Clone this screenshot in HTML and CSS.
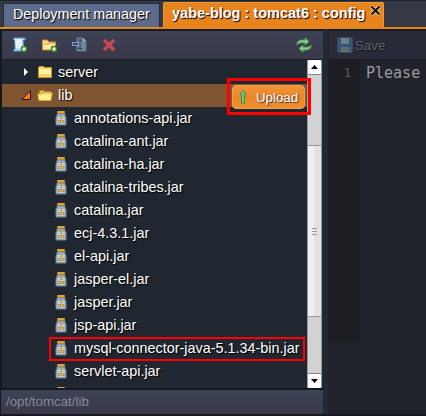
FILE: index.html
```html
<!DOCTYPE html>
<html lang="en">
<head>
<meta charset="utf-8">
<title>Config</title>
<link rel="stylesheet" href="styles.css">
</head>
<body>
<svg width="0" height="0" class="defs">
  <symbol id="jar" viewBox="0 0 16 16">
    <path d="M4 4h8v2l1 1.500v7.500H3V7.500L4 6z" fill="#9fb3c5" stroke="#64839d"/>
    <path d="M4.500 7h7v7h-7z" fill="#c3cbd2"/>
    <path d="M4 1h8v3H4z" fill="#b88425"/><path d="M5 1.500h6v1H5z" fill="#efc768"/>
    <path d="M7 6h2v3H7zM5 10h3v3H5zM8.500 10h3v3h-3z" fill="#b99345"/>
    <path d="M7 7h1v1H7zM6 11h1v1H6zM9 11h1v1H9z" fill="#ffe58e"/>
  </symbol>
  <symbol id="plus" viewBox="0 0 7 7">
    <circle cx="3.500" cy="3.500" r="3.200" fill="#43942b" stroke="#286c1b" stroke-width=".6"/>
    <path d="M3.500 1.500v4M1.500 3.500h4" stroke="#fff" stroke-width="1.200"/>
  </symbol>
</svg>
<div class="app">
  <header class="tabs">
    <div class="tab">Deployment manager</div>
    <div class="tab active">yabe-blog : tomcat6 : config
      <svg class="close" width="11" height="11" viewBox="0 0 11 11"><path d="M1.500 1.500l8 8M9.500 1.500l-8 8" stroke="#fff1d5" stroke-width="3.600"/><path d="M1.500 1.500l8 8M9.500 1.500l-8 8" stroke="#17130d" stroke-width="2.300"/></svg>
    </div>
  </header>
  <main class="panes">
    <section class="files">
      <div class="toolbar">
        <svg width="16" height="16" viewBox="0 0 16 16"><path d="M2 1h10q2 0 1 2h-2l1 11H1l2-2V4Q1 3 2 1z" fill="#b9dcfa" stroke="#5b94cf"/><path d="M3 2h7v9H4z" fill="#e5f3ff"/><use href="#plus" x="8.500" y="8.500" width="7" height="7"/></svg>
        <svg width="16" height="16" viewBox="0 0 16 16"><path d="M.5 3h5l1 2h7v8H.5z" fill="#f8dd8b" stroke="#c59238"/><path d="M2 7h5l1-1h5v6H2z" fill="#ffe8a2"/><path d="M2 7h5l1-1h5" fill="none" stroke="#d29d3d"/><use href="#plus" x="8.500" y="8.500" width="7" height="7"/></svg>
        <svg width="16" height="16" viewBox="0 0 16 16"><path d="M5 1h6l3 3v10H5z" fill="#6f879d" stroke="#60798e"/><path d="M11 1v3h3" fill="#a8bac8"/><path d="M0 5h8v4H0z" fill="#8999b4"/><path d="M1 6h5v2H1z" fill="#25479a"/><path d="M6 3h4M8 3v8M6 11.500h4" fill="none" stroke="#283746"/></svg>
        <svg width="16" height="16" viewBox="0 0 16 16"><path d="M2 3l10 10M12 3L2 13" stroke="#963f4b" stroke-width="4"/><path d="M2 3l10 10M12 3L2 13" stroke="#c34f57" stroke-width="2.400"/></svg>
        <svg class="refresh" width="16" height="16" viewBox="0 0 16 16"><path d="M.5 7.500Q1.500 2 9 3V.8l4 3.700L9 8V6Q4 5 .5 7.500zM15.500 8.500q-1 5.500-8.500 4.500v2.200L3 11.500 7 8v2q5 1 8.500-1.500z" fill="#83cd83" stroke="#469a4c" stroke-width=".8"/></svg>
      </div>
      <div class="browser">
        <div class="tree">
          <div class="row folder"><svg class="arrow" width="10" height="10" viewBox="0 0 10 10"><path d="M3 1v8l4-4z" fill="#fff"/></svg><svg width="16" height="16" viewBox="0 0 16 16"><path d="M1.500 3.500l1-1h4l1 1h7v10h-13z" fill="#f4d66d" stroke="#c7962f"/><path d="M2 5h12v5H2z" fill="#fff0a4"/></svg><span>server</span></div>
          <div class="row folder selected"><svg class="arrow" width="10" height="10" viewBox="0 0 10 10"><path d="M9.500.8v8.700H.8z" fill="#ff8000" stroke="#181514"/></svg><svg width="16" height="16" viewBox="0 0 16 16"><path d="M2.500 12.500v-9h4l1 1h6v8z" fill="#e7bd45" stroke="#b78b24"/><path d="M.8 7h4l1-1h9.500l-1.500 7.500H2z" fill="#fff08e" stroke="#d5ad3a"/></svg><span>lib</span>
            <div class="callout"><button class="upload"><svg width="8" height="14" viewBox="0 0 8 14"><path d="M4 .5l3 4H5.500v9h-3v-9H1z" fill="#76c874" stroke="#3f914b"/></svg><span>Upload</span></button></div>
          </div>
          <div class="row"><svg width="16" height="16"><use href="#jar"/></svg><span>annotations-api.jar</span></div>
          <div class="row"><svg width="16" height="16"><use href="#jar"/></svg><span>catalina-ant.jar</span></div>
          <div class="row"><svg width="16" height="16"><use href="#jar"/></svg><span>catalina-ha.jar</span></div>
          <div class="row"><svg width="16" height="16"><use href="#jar"/></svg><span>catalina-tribes.jar</span></div>
          <div class="row"><svg width="16" height="16"><use href="#jar"/></svg><span>catalina.jar</span></div>
          <div class="row"><svg width="16" height="16"><use href="#jar"/></svg><span>ecj-4.3.1.jar</span></div>
          <div class="row"><svg width="16" height="16"><use href="#jar"/></svg><span>el-api.jar</span></div>
          <div class="row"><svg width="16" height="16"><use href="#jar"/></svg><span>jasper-el.jar</span></div>
          <div class="row"><svg width="16" height="16"><use href="#jar"/></svg><span>jasper.jar</span></div>
          <div class="row"><svg width="16" height="16"><use href="#jar"/></svg><span>jsp-api.jar</span></div>
          <div class="row marked"><svg width="16" height="16"><use href="#jar"/></svg><span>mysql-connector-java-5.1.34-bin.jar</span></div>
          <div class="row"><svg width="16" height="16"><use href="#jar"/></svg><span>servlet-api.jar</span></div>
          <div class="row"><svg width="16" height="16"><use href="#jar"/></svg><span>tomcat-coyote.jar</span></div>
        </div>
        <div class="scrollbar">
          <div class="step"><svg width="7" height="4" viewBox="0 0 7 4"><path d="M0 4h7L3.500 0z"/></svg></div>
          <div class="thumb"><i></i><i></i><i></i></div>
          <div class="step down"><svg width="7" height="4" viewBox="0 0 7 4"><path d="M0 0h7L3.500 4z"/></svg></div>
        </div>
      </div>
      <footer class="path">/opt/tomcat/lib</footer>
    </section>
    <section class="editor">
      <div class="save"><svg width="16" height="16" viewBox="0 0 16 16"><path d="M1 1h14v14H2l-1-1z" fill="#34527b" stroke="#446386"/><path d="M4 1h8v6H4z" fill="#737d88"/><path d="M4 10h8v5H4z" fill="#65736e"/><path d="M5 12h6v1H5z" fill="#456a4e"/></svg><span>Save</span></div>
      <div class="code"><div class="gutter">1</div><pre>Please</pre></div>
    </section>
  </main>
</div>
</body>
</html>
```
FILE: styles.css
```css
*, *::after { box-sizing: border-box; }
body { margin: 0; width: 426px; height: 416px; overflow: hidden; background: #171a20; font-family: "Liberation Sans", Arial, sans-serif; }
.defs { display: block; height: 0; }
svg { display: block; flex: none; }
.app { width: 426px; height: 416px; display: flex; flex-direction: column; }
.tabs { height: 29px; flex: none; display: flex; align-items: flex-end; gap: 3px; padding: 0 0 2px 3px; background: linear-gradient(#202127 0 1px, #353945 1px 27px, #e8841e 27px); }
.tab { width: 157px; height: 24px; flex: none; padding-left: 9px; color: #fff; font-size: 14.300px; line-height: 21px; background: #5c6b8b; border: 1px solid #222c3e; border-bottom: 0; text-shadow: 1px 1px 1px #000; white-space: nowrap; }
.tab.active { width: 221px; height: 25px; display: flex; padding-left: 8px; font-size: 14.500px; font-weight: bold; background: #e8841e; border-color: #eb9b35; border-radius: 2px 2px 0 0; }
.close { margin: 2px 0 0 5px; }
.panes { display: flex; flex: 1; min-height: 0; background: #202a33; border-bottom: 2px solid #15181e; }
.files { width: 323px; padding-left: 1px; flex: none; display: flex; flex-direction: column; border-top: 2px solid #191b22; background: #15181e; }
.toolbar { height: 29px; flex: none; display: flex; align-items: center; gap: 14px; padding: 0 11px; margin-left: 1px; background: linear-gradient(#3d4255, #39394a); border-bottom: 1px solid #191c23; }
.toolbar > svg:first-child { margin-left: -1px; }
.refresh { margin-left: auto; }
.browser { height: 329px; flex: none; margin-left: 1px; display: flex; position: relative; overflow: hidden; background: #202730; border-bottom: 1px solid #14171d; }
.tree { flex: 1; padding-top: 1px; }
.row { height: 23px; display: flex; align-items: center; gap: 5px; padding-left: 51px; color: #fff; font-size: 14.400px; line-height: 21px; padding-bottom: 1px; text-shadow: 1px 1px 1px #000; white-space: nowrap; }
.folder { padding-left: 19px; }
.folder > svg + svg { margin-left: 1px; }
.folder > span { margin-left: 0; }
.selected { background: #7e5431; position: relative; }
.callout { position: absolute; left: 225px; top: -6px; width: 84px; height: 37px; border: 3px solid #f00; padding: 4px 3px 0 2px; z-index: 2; }
.upload { width: 73px; height: 24px; display: flex; align-items: center; gap: 9px; padding: 0 6px; color: #fff; font: 13.300px/23px "Liberation Sans", Arial, sans-serif; background: linear-gradient(#f0943a, #eb8628 48%, #f18e2c); border: 1px solid #f5a14a; border-radius: 4px; text-shadow: 1px 1px 1px #333; }
.marked { position: relative; }
.marked::after { content: ""; position: absolute; left: 47px; top: 0; width: 256px; height: 24px; border: 2px solid #f00; }
.scrollbar { width: 15px; height: 328px; flex: none; display: flex; flex-direction: column; background: #d2d2d2; border: 1px solid #999; margin-right: 1px; border-top: 0; border-bottom: 0; }
.step { height: 15px; flex: none; display: grid; place-items: center; background: #fff; border-bottom: 1px solid #888; border-radius: 3px 3px 0 0; }
.step.down { margin-top: auto; border-bottom: 0; border-top: 1px solid #888; border-radius: 0 0 3px 3px; }
.thumb { height: 172px; margin-top: 70px; display: flex; flex-direction: column; align-items: center; justify-content: center; gap: 2px; background: linear-gradient(90deg, #f0f0f0 50%, #e3e3e3 50%); border: 1px solid #999; border-width: 1px 0; }
.thumb i { width: 5px; height: 1px; background: #999; }
.path { height: 24px; margin-top: 1px; padding-left: 5px; color: #848999; font-size: 13.300px; line-height: 24px; background: linear-gradient(#3d4255, #39394a); }
.editor { width: 98px; flex: none; margin-left: 5px; display: flex; flex-direction: column; border-top: 2px solid #191b22; background: #20232b; }
.save { height: 29px; display: flex; align-items: center; gap: 2px; padding-left: 8px; margin-left: 1px; background: #292c38; border-bottom: 1px solid #181b21; color: #5f6370; font-size: 13.300px; text-shadow: 1px 1px 1px #111; }
.code { height: 282px; display: flex; font-family: "DejaVu Sans Mono", monospace; line-height: 26px; }
.gutter { width: 32px; padding-right: 9px; text-align: right; background: #1d1e23; color: #5a5d62; font-size: 12px; }
.code pre { margin: 0; padding-left: 6px; color: #9a9b9c; font: inherit; font-size: 15px; }
```
